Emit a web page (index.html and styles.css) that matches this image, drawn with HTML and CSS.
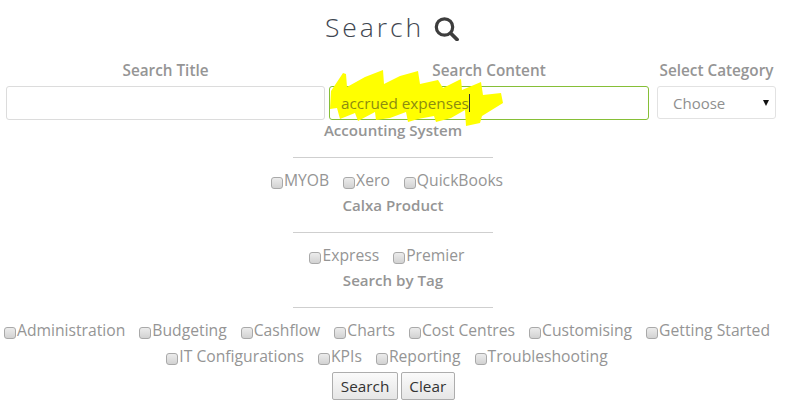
FILE: index.html
```html
<!DOCTYPE html>
<html lang="en">
<head>
<meta charset="utf-8">
<title>Search</title>
<link rel="stylesheet" href="styles.css">
</head>
<body>
<h1 class="title">Search
<svg class="title-icon" viewBox="0 0 25 24" width="25" height="24"><circle cx="10.5" cy="10" r="8.2" fill="none" stroke="#3d3d3d" stroke-width="3.2"/><path d="M17 16.5 L23 22.5" stroke="#3d3d3d" stroke-width="3.8" stroke-linecap="round"/></svg>
</h1>
<div class="fields">
  <div class="field"><label class="field-label">Search Title</label><input class="text-input" type="text"></div>
  <div class="field">
    <label class="field-label">Search Content</label>
    <div class="active-box"></div>
    <svg class="scribble" viewBox="325 62 190 70" width="190" height="70"><path d="M331 91 L343 73 L346 74 L347 87 L365 77 L383 70 L384 84 L400 76 L418 71 L420 84 L438 80 L443 88 L461 79 L462 90 L481 82 L483 95 L501 93 L503 103 L482 116 L480 123 L466 126 L465 110 L451 118 L436 122 L434 116 L418 119 L408 122 L406 112 L390 118 L376 120 L375 112 L358 121 L355 113 L340 119 L337 108 L330 109 Z" fill="#ffff00"/></svg>
    <div class="typed"><span>accrued expenses</span><span class="caret"></span></div>
  </div>
  <div class="field field-select">
    <label class="field-label">Select Category</label>
    <div class="select-box"><span>Choose</span><span class="arrow"></span></div>
  </div>
</div>
<section class="group">
  <h2 class="group-title">Accounting System</h2>
  <hr class="rule">
  <div class="checks">
    <label class="check"><span class="box"></span>MYOB</label>
    <label class="check"><span class="box"></span>Xero</label>
    <label class="check"><span class="box"></span>QuickBooks</label>
  </div>
</section>
<section class="group">
  <h2 class="group-title">Calxa Product</h2>
  <hr class="rule">
  <div class="checks">
    <label class="check"><span class="box"></span>Express</label>
    <label class="check"><span class="box"></span>Premier</label>
  </div>
</section>
<section class="group">
  <h2 class="group-title">Search by Tag</h2>
  <hr class="rule">
  <div class="checks">
    <label class="check"><span class="box"></span>Administration</label>
    <label class="check"><span class="box"></span>Budgeting</label>
    <label class="check"><span class="box"></span>Cashflow</label>
    <label class="check"><span class="box"></span>Charts</label>
    <label class="check"><span class="box"></span>Cost Centres</label>
    <label class="check"><span class="box"></span>Customising</label>
    <label class="check"><span class="box"></span>Getting Started</label>
  </div>
  <div class="checks">
    <label class="check"><span class="box"></span>IT Configurations</label>
    <label class="check"><span class="box"></span>KPIs</label>
    <label class="check"><span class="box"></span>Reporting</label>
    <label class="check"><span class="box"></span>Troubleshooting</label>
  </div>
</section>
<div class="actions">
  <button class="btn" type="button">Search</button>
  <button class="btn" type="button">Clear</button>
</div>
</body>
</html>
```
FILE: styles.css
```css
* { box-sizing: border-box; }
html, body { margin: 0; padding: 0; }
body {
  width: 787px;
  height: 406px;
  overflow: hidden;
  background: #fff;
  font-family: "Open Sans", "Noto Sans", sans-serif;
  color: #8f8f8f;
}
.title {
  margin: 0;
  height: 54px;
  padding-right: 3px;
  display: flex;
  justify-content: center;
  align-items: center;
  gap: 10px;
  font-size: 26.5px;
  line-height: 34px;
  font-weight: 300;
  letter-spacing: 2.9px;
  color: #3f4650;
}
.title-icon { display: block; margin-top: 4px; }
.fields {
  display: grid;
  grid-template-columns: 319px 320px 119px;
  column-gap: 4px;
  padding: 7px 0 0 6px;
  height: 67px;
}
.field { position: relative; display: flex; flex-direction: column; align-items: stretch; }
.field-select { margin-left: 4px; margin-right: -4px; }
.field-label {
  height: 25px;
  line-height: 18px;
  text-align: center;
  font-size: 15.3px;
  font-weight: 600;
  color: #959595;
}
.text-input {
  display: block;
  width: 100%;
  height: 34px;
  border: 1px solid #dcdcdc;
  border-radius: 3px;
  background: #fff;
}
.active-box {
  height: 34px;
  border: 1px solid #86bf37;
  border-radius: 3px;
  background: #fff;
}
.scribble { position: absolute; left: -4px; top: 1px; }
.typed {
  position: absolute;
  left: 12px;
  top: 32px;
  display: flex;
  align-items: center;
  font-size: 15.3px;
  line-height: 20px;
  color: #8c8c10;
}
.caret { width: 1px; height: 18px; background: #333; }
.select-box {
  width: 119px;
  height: 33px;
  border: 1px solid #e2e2e2;
  border-radius: 3px;
  padding: 0 6px 0 15px;
  display: flex;
  align-items: center;
  justify-content: space-between;
  font-size: 15px;
  color: #8f8f8f;
}
.arrow {
  width: 0; height: 0;
  border-left: 3.5px solid transparent;
  border-right: 3.5px solid transparent;
  border-top: 6px solid #111;
}
.group { display: flex; flex-direction: column; align-items: center; padding-right: 1px; }
.group-title {
  margin: 0;
  height: 36px;
  line-height: 18px;
  font-size: 15.1px;
  font-weight: 600;
  color: #959595;
}
.rule {
  width: 200px;
  height: 1px;
  margin: 0 0 12px;
  border: 0;
  background: #cfcfcf;
}
.checks {
  display: flex;
  justify-content: center;
  gap: 14px;
  height: 26px;
  padding-right: 12px;
  line-height: 20px;
  font-size: 15.7px;
  color: #959595;
}
.check { display: inline-flex; align-items: center; height: 20px; }
.box {
  width: 12px;
  height: 12px;
  margin-top: 5px;
  margin-right: 1px;
  border: 1px solid #a9a9a9;
  border-radius: 3px;
  background: linear-gradient(#ececec, #d2d2d2);
}
.actions { display: flex; justify-content: center; gap: 3px; }
.btn {
  height: 28px;
  padding: 0 7.5px;
  border: 1px solid #adadad;
  border-radius: 2px;
  background: linear-gradient(#fafafa, #e6e6e6);
  font-family: "Open Sans", "Noto Sans", sans-serif;
  font-size: 15.3px;
  color: #333;
}
```
